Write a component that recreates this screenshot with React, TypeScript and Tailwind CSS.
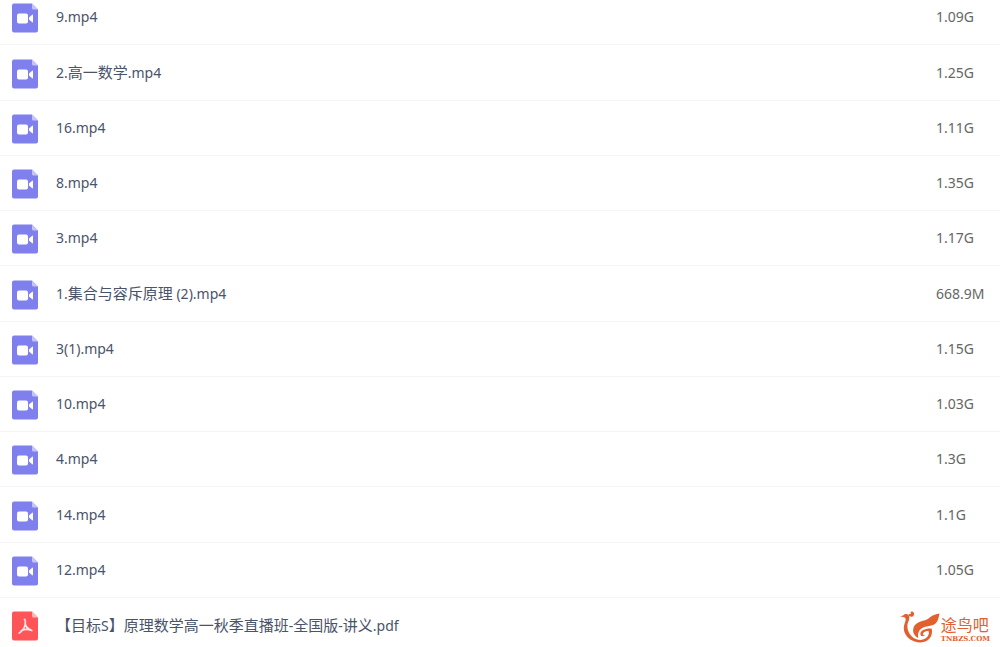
import { clsx } from 'clsx';

type FileKind = 'video' | 'pdf';

interface FileItem {
  name: string;
  size?: string;
  kind: FileKind;
}

const files: FileItem[] = [
  { name: '9.mp4', size: '1.09G', kind: 'video' },
  { name: '2.高一数学.mp4', size: '1.25G', kind: 'video' },
  { name: '16.mp4', size: '1.11G', kind: 'video' },
  { name: '8.mp4', size: '1.35G', kind: 'video' },
  { name: '3.mp4', size: '1.17G', kind: 'video' },
  { name: '1.集合与容斥原理 (2).mp4', size: '668.9M', kind: 'video' },
  { name: '3(1).mp4', size: '1.15G', kind: 'video' },
  { name: '10.mp4', size: '1.03G', kind: 'video' },
  { name: '4.mp4', size: '1.3G', kind: 'video' },
  { name: '14.mp4', size: '1.1G', kind: 'video' },
  { name: '12.mp4', size: '1.05G', kind: 'video' },
  { name: '【目标S】原理数学高一秋季直播班-全国版-讲义.pdf', kind: 'pdf' },
];

function FileIcon({ kind }: { kind: FileKind }) {
  const isVideo = kind === 'video';

  return (
    <svg viewBox="0 0 26 30" className="block h-[30px] w-[26px]" aria-hidden="true">
      <path
        d="M2 .5H20L26 6.5V27.5A2 2 0 0 1 24 29.5H2A2 2 0 0 1 0 27.5V2.5A2 2 0 0 1 2 .5Z"
        fill={isVideo ? '#7f80ee' : '#ff5558'}
      />
      <path d="M20 .5L26 6.5H21.5A1.5 1.5 0 0 1 20 5Z" fill={isVideo ? '#c5c5fa' : '#ffb9ba'} />
      {isVideo ? (
        <g fill="#fff">
          <rect x="5" y="10.5" width="11" height="10" rx="2" />
          <path d="M17 14.5L20.2 11.7Q21 11.2 21 12.3V18.7Q21 19.8 20.2 19.3L17 16.5Z" />
        </g>
      ) : (
        <path
          d="M12.4 8.3C13.9 8.5 13.2 11.3 13.3 13.2C14 16 16.8 18.2 19.8 19.5M13.3 13.2C12.6 16.7 10.2 20.2 7.2 22.1M9.2 19.7C12.3 18.3 16.3 18.1 19.8 19.5"
          fill="none"
          stroke="#ffe9e9"
          strokeWidth="1.7"
          strokeLinecap="round"
          strokeLinejoin="round"
        />
      )}
    </svg>
  );
}

function FileName({ name }: { name: string }) {
  // Chinese runs are set one step larger than the Latin text
  const parts = name.split(/([\u3010\u3011\u4e00-\u9fff]+)/);

  return (
    <>
      {parts.map((part, i) => (
        <span key={i} className={clsx(i % 2 === 1 && 'text-[15px]')}>
          {part}
        </span>
      ))}
    </>
  );
}

function Watermark() {
  return (
    <div className="absolute right-2.5 bottom-1 flex items-end gap-px text-[#e2602f]">
      <svg viewBox="0 0 40 32" className="h-8 w-10" fill="currentColor" aria-hidden="true">
        <path d="M0 5.8L3.4 4.2C4.8 2.4 8 2.5 9 4.8C10.1 7.4 8.6 9.6 7.8 12C6.6 16.4 8 21.6 11.6 25.2C14.4 27.8 17.4 29 21 28.9C24.6 28.7 27.4 26.8 28.6 23.6C29 22.2 28.9 21 28.5 20.2C26.4 19.8 23.8 20.8 22.9 22.8C22.6 23.8 23.2 24.3 25.4 23.8C23.8 25.8 20.6 25.6 20.4 23.2C20.2 19.8 25 17.2 31.6 17.6C32.8 21.8 31.4 26.2 28.2 28.8C24.8 31.6 19.4 32.2 14.6 30.6C8.4 28.5 4 23.4 3.8 17.6C3.7 14 5.4 11.2 5.7 8.8C5.8 6.2 3.2 5.8 0 5.8Z" />
        <path d="M8.6 2.9C10.2 3.4 11.4 2.9 10.6 1.8C10.4.5 12-.1 13.2.9C14.8 2.3 14.2 4.7 12.4 5.5C11 6 9.6 5.6 9 4.6Z" />
        <path d="M39.5 2.5C38.6 6.4 38.2 11.2 34.2 13.5C30.4 15.6 25.8 14.8 22.2 17C18.6 19.2 17.6 22.6 18.2 27C14.2 24.8 12.4 21.2 13.4 17.2C14.6 12.6 18.8 11.2 23 9.8C25.8 8.9 28.2 8.2 30 6.2C32.8 3.6 36.2 3.4 39.5 2.5Z" />
      </svg>
      <div className="flex flex-col">
        <span className="text-[16px] leading-5">途鸟吧</span>
        <span className="font-['DejaVu_Serif',serif] text-[7px] leading-2 font-bold">TNBZS.COM</span>
      </div>
    </div>
  );
}

export default function App() {
  return (
    <main className="relative h-screen overflow-hidden bg-white font-['Noto_Sans','Noto_Sans_CJK_SC',sans-serif] text-[14px] leading-5">
      <table className="-mt-2.5 w-full table-fixed border-separate border-spacing-0">
        <colgroup>
          <col className="w-14" />
          <col />
          <col className="w-16" />
        </colgroup>
        <tbody>
          {files.map((file) => (
            <tr
              key={file.name}
              className="h-[55px] *:border-b *:border-[#f4f5f7] [&:nth-child(4n+2)]:h-14"
            >
              <td className="pt-0.5 pl-3 align-middle">
                <FileIcon kind={file.kind} />
              </td>
              <td className="truncate align-middle text-[#49536a]">
                <FileName name={file.name} />
              </td>
              <td className="align-middle text-[#666]">{file.size}</td>
            </tr>
          ))}
        </tbody>
      </table>
      <Watermark />
    </main>
  );
}
